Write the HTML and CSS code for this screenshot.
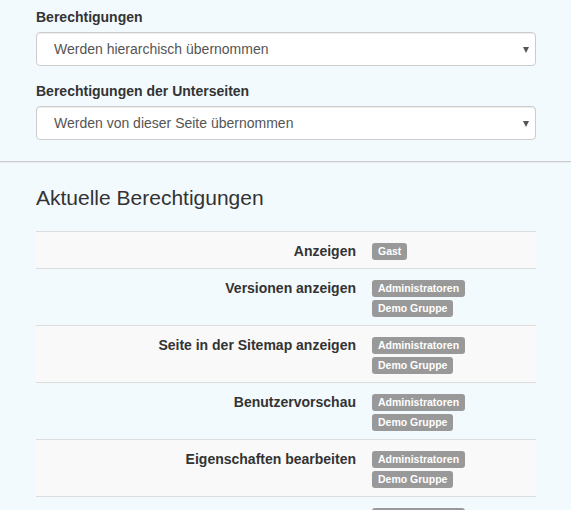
FILE: index.html
```html
<!DOCTYPE html>
<html lang="de">
<head>
<meta charset="utf-8">
<title>Berechtigungen</title>
<link rel="stylesheet" href="styles.css">
</head>
<body>
<div class="wrap">
  <div class="form-group">
    <label class="ctl-label">Berechtigungen</label>
    <div class="select-box">
      <select class="form-control">
        <option>Werden hierarchisch übernommen</option>
      </select>
    </div>
  </div>
  <div class="form-group">
    <label class="ctl-label">Berechtigungen der Unterseiten</label>
    <div class="select-box">
      <select class="form-control">
        <option>Werden von dieser Seite übernommen</option>
      </select>
    </div>
  </div>
</div>
<hr class="divider">
<div class="wrap">
  <h3 class="title">Aktuelle Berechtigungen</h3>
  <div class="perm-table">
    <div class="row striped">
      <div class="cell-label">Anzeigen</div>
      <div class="cell-groups"><div class="g"><span class="badge">Gast</span></div></div>
    </div>
    <div class="row">
      <div class="cell-label">Versionen anzeigen</div>
      <div class="cell-groups"><div class="g"><span class="badge">Administratoren</span></div><div class="g"><span class="badge">Demo Gruppe</span></div></div>
    </div>
    <div class="row striped">
      <div class="cell-label">Seite in der Sitemap anzeigen</div>
      <div class="cell-groups"><div class="g"><span class="badge">Administratoren</span></div><div class="g"><span class="badge">Demo Gruppe</span></div></div>
    </div>
    <div class="row">
      <div class="cell-label">Benutzervorschau</div>
      <div class="cell-groups"><div class="g"><span class="badge">Administratoren</span></div><div class="g"><span class="badge">Demo Gruppe</span></div></div>
    </div>
    <div class="row striped">
      <div class="cell-label">Eigenschaften bearbeiten</div>
      <div class="cell-groups"><div class="g"><span class="badge">Administratoren</span></div><div class="g"><span class="badge">Demo Gruppe</span></div></div>
    </div>
    <div class="row">
      <div class="cell-label">Seitentyp ändern</div>
      <div class="cell-groups"><div class="g"><span class="badge">Administratoren</span></div><div class="g"><span class="badge">Demo Gruppe</span></div></div>
    </div>
  </div>
</div>
</body>
</html>
```

FILE: styles.css
```css
html, body {
  margin: 0;
  padding: 0;
}
body {
  background: #f2fafe;
  font-family: "Liberation Sans", Arial, sans-serif;
  font-size: 14px;
  line-height: 20px;
  color: #333;
}
.wrap {
  padding: 7px 35px 0 36px;
}
.form-group {
  margin-bottom: 15px;
}
.ctl-label {
  display: block;
  font-weight: bold;
  margin-bottom: 5px;
}
.select-box {
  position: relative;
}
.select-box::after {
  content: "";
  position: absolute;
  right: 7px;
  top: 15px;
  border-left: 3.5px solid transparent;
  border-right: 3.5px solid transparent;
  border-top: 6px solid #555;
  pointer-events: none;
}
.form-control {
  display: block;
  width: 100%;
  height: 34px;
  box-sizing: border-box;
  -webkit-appearance: none;
  appearance: none;
  background: #fff;
  border: 1px solid #ccc;
  border-radius: 4px;
  box-shadow: inset 0 1px 1px rgba(0,0,0,0.075);
  padding: 0 24px 0 17px;
  font-family: "Liberation Sans", Arial, sans-serif;
  font-size: 14px;
  color: #555;
  margin: 0;
}
.divider {
  margin: 21px 0 0 0;
  border: 0;
  border-top: 1px solid #ccc;
  border-bottom: 1px solid #e8eef1;
  height: 0;
}
.title {
  margin: 13px 0 0 0;
  font-size: 21px;
  font-weight: normal;
  line-height: 30px;
  color: #333;
}
.perm-table {
  margin-top: 18px;
}
.row {
  display: grid;
  grid-template-columns: 328px 1fr;
  border-top: 1px solid #ddd;
}
.row.striped {
  background: #f9f9f9;
}
.cell-label {
  padding: 9px 8px 7px;
  text-align: right;
  font-weight: bold;
}
.cell-groups {
  padding: 8px;
}
.g {
  line-height: 20px;
}
.badge {
  display: inline;
  background: #999;
  color: #fff;
  font-size: 10.5px;
  font-weight: bold;
  line-height: 1;
  padding: 2px 6px 3px;
  border-radius: 3px;
  white-space: nowrap;
}
```
